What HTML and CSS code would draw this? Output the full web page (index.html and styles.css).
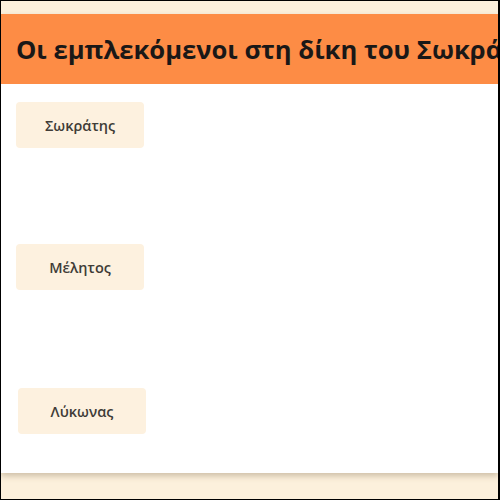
FILE: index.html
```html
<!DOCTYPE html>
<html lang="el">
<head>
<meta charset="utf-8">
<link rel="stylesheet" href="styles.css">
</head>
<body>
<div class="frame">
  <div class="card">
    <header class="title-bar">
      <h1 class="title">Οι εμπλεκόμενοι στη δίκη του Σωκράτη</h1>
    </header>
    <main class="content">
      <div class="chip chip-1">Σωκράτης</div>
      <div class="chip chip-2">Μέλητος</div>
      <div class="chip chip-3">Λύκωνας</div>
    </main>
  </div>
</div>
</body>
</html>
```
FILE: styles.css
```css
html, body {
  margin: 0;
  padding: 0;
  background: #000;
}
.frame {
  width: 500px;
  height: 500px;
  box-sizing: border-box;
  border-top: 1px solid #000;
  border-left: 1px solid #000;
  border-bottom: 1px solid #000;
  border-right: 2px solid #000;
  background: #fcf0dc;
  padding-top: 13px;
  overflow: hidden;
}
.card {
  background: #fff;
  box-shadow: 0 3px 6px rgba(120, 100, 70, 0.35);
  height: 459px;
  display: flex;
  flex-direction: column;
}
.title-bar {
  background: #fd8c45;
  height: 70px;
  display: flex;
  align-items: center;
  padding-left: 15px;
  overflow: hidden;
  white-space: nowrap;
}
.title {
  margin: 0;
  font-family: "Open Sans", "Noto Sans", sans-serif;
  font-weight: 700;
  font-size: 25.6px;
  color: #1a1817;
}
.content {
  display: flex;
  flex-direction: column;
  align-items: flex-start;
  padding-top: 18px;
}
.chip {
  width: 128px;
  height: 46px;
  border-radius: 4px;
  background: #fdf1df;
  display: flex;
  align-items: center;
  justify-content: center;
  font-family: "Open Sans", "Noto Sans", sans-serif;
  font-weight: 600;
  font-size: 14.5px;
  color: #403c37;
}
.chip-1 { margin-left: 15px; }
.chip-2 { margin-left: 15px; margin-top: 96px; }
.chip-3 { margin-left: 17px; margin-top: 98px; }
```
